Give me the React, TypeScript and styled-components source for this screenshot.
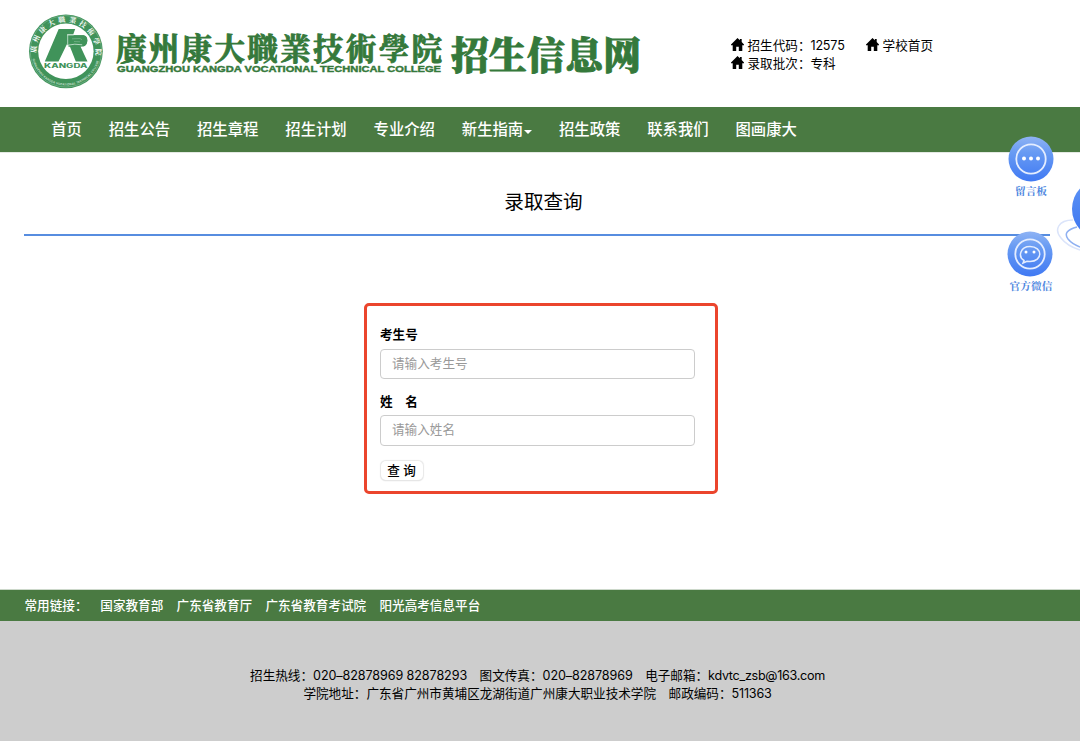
import React from 'react';
import styled, { createGlobalStyle } from 'styled-components';

const GREEN = '#4a7a42';
const LOGO_GREEN = '#35793b';
const SEAL_GREEN = '#40935a';
const BLUE = '#4d86e0';

const GlobalStyle = createGlobalStyle`
  * { box-sizing: border-box; }
  body {
    margin: 0;
    background: #fff;
    color: #000;
    font-family: Inter, 'Noto Sans CJK SC', sans-serif;
    font-size: 12.6px;
    line-height: 18px;
  }
`;

const Page = styled.div`
  position: relative;
  width: 1080px;
  height: 741px;
  overflow: hidden;
  display: flex;
  flex-direction: column;
`;

const Header = styled.header`
  display: flex;
  height: 107px;
  flex: none;
`;

const Logo = styled.svg`
  display: block;
  width: 731px;
  height: 107px;
  flex: none;
`;

const SchoolInfo = styled.div`
  padding-top: 37px;
`;

const InfoRow = styled.div`
  display: flex;
  gap: 21.5px;
`;

const InfoItem = styled.a`
  display: flex;
  align-items: center;
  white-space: nowrap;
  height: 18px;
  svg {
    width: 13px;
    height: 13px;
    margin: -3px 3.5px 0 0;
  }
`;

const Latin = styled.span<{ $spacing?: number }>`
  letter-spacing: ${(p) => p.$spacing ?? 0}px;
`;

const Nav = styled.nav`
  display: flex;
  flex: none;
  align-items: center;
  gap: 26.9px;
  height: 45px;
  padding: 1px 0 0 51.2px;
  background: ${GREEN};
  box-shadow: 0 1px 0 #e4e9e3;
`;

const NavLink = styled.a`
  display: flex;
  align-items: center;
  color: #fff;
  font-size: 15.35px;
  font-weight: 500;
  line-height: 22px;
  white-space: nowrap;
`;

const Caret = styled.span`
  margin: 3px 0 0 0.9px;
  border: 4px solid transparent;
  border-top-color: #fff;
  border-bottom-width: 0;
`;

const Main = styled.main`
  flex: 1;
  margin: 0 30px 0 24px;
`;

const Title = styled.h1`
  margin: 0;
  height: 84px;
  padding: 35px 0 0 13px;
  border-bottom: 2px solid #578de0;
  font-size: 19.6px;
  font-weight: 400;
  line-height: 30px;
  text-align: center;
`;

const QueryForm = styled.form`
  width: 354px;
  height: 191px;
  margin: 67px 0 0 340px;
  padding: 20px 20px 0 13px;
  border: 3px solid #eb452d;
  border-radius: 5px;
`;

const Label = styled.label`
  display: block;
  height: 22.5px;
  font-weight: 600;
  white-space: pre;
`;

const Field = styled.input`
  display: block;
  width: 315px;
  height: 30.5px;
  margin-bottom: 13.5px;
  padding: 0 11px 1px;
  border: 1px solid #ccc;
  border-radius: 4px;
  font: inherit;
  outline: 0;
  &::placeholder { color: #999; opacity: 1; }
`;

const SubmitButton = styled.button`
  display: block;
  width: 42px;
  height: 19px;
  margin: 15px 0 0 0.5px;
  padding: 0;
  border: 0;
  border-radius: 5px;
  background: #fff;
  box-shadow: 0 0 1px 0.5px #e8e8e8, 0 1px 1px #d0d0d0;
  color: #000;
  font: inherit;
  font-weight: 500;
  line-height: 17px;
`;

const LinksBar = styled.section`
  display: flex;
  flex: none;
  align-items: center;
  gap: 13.3px;
  height: 31px;
  padding: 0 0 0 24.5px;
  background: ${GREEN};
  box-shadow: 0 -1px 0 #ccd8ca;
  color: #fff;
  font-weight: 500;
  white-space: nowrap;
`;

const LinksTitle = styled.span`
  width: 62.5px;
`;

const Footer = styled.footer`
  display: flex;
  flex: none;
  flex-direction: column;
  align-items: center;
  height: 120px;
  padding: 46px 5px 0 0;
  background: #cdcdcd;
  white-space: nowrap;
`;

const FooterRow = styled.div`
  display: flex;
  gap: 12.5px;
`;

const FloatingTools = styled.aside`
  position: absolute;
  top: 136px;
  left: 1000px;
  width: 80px;
`;

const Tool = styled.a<{ $shift?: number }>`
  display: flex;
  flex-direction: column;
  align-items: center;
  width: 62px;
  height: 95px;
  color: ${BLUE};
  font-family: 'Noto Serif CJK SC', 'Noto Sans CJK SC', serif;
  font-size: 10.7px;
  font-weight: 700;
  line-height: 16px;
  svg {
    width: 46px;
    height: 46px;
    margin-bottom: 1px;
    margin-left: ${(p) => p.$shift ?? -1}px;
  }
`;

const Orb = styled.svg`
  position: absolute;
  top: 170px;
  left: 1050px;
  width: 30px;
  height: 90px;
`;

const HomeIcon = () => (
  <svg viewBox="0 0 13 13" fill="#000">
    <path d="M6.500 0 8.900 2.300V1h1.800v3.100L13 6.500v.8h-1.700V13H7.800V8.800H5.200V13H1.700V7.300H0v-.8z" />
  </svg>
);

const SchoolLogo = () => (
  <Logo viewBox="0 0 731 107">
    <defs>
      <path id="sealTop" d="M36.500 56A29.700 29.700 0 1 1 95.300 56" />
      <path id="sealBottom" d="M32 57A34.400 34.400 0 0 0 99.800 57" />
    </defs>
    <circle cx="65.900" cy="51.300" r="36.900" fill={SEAL_GREEN} />
    <circle cx="65.900" cy="51.300" r="35.700" fill="none" stroke="#8fc0a0" strokeWidth=".5" />
    <circle cx="65.900" cy="51.300" r="27.700" fill="#fff" />
    <text fill="#fff" fontSize="7.100" fontWeight="700" fontFamily="'Noto Serif CJK TC', serif">
      <textPath href="#sealTop" startOffset="3" textLength="98">廣州康大職業技術學院</textPath>
    </text>
    <text fill="#c5dfcd" fontSize="2.900" fontWeight="700">
      <textPath href="#sealBottom" startOffset="2" textLength="90">GUANGZHOU KANGDA VOCATIONAL TECHNICAL COLLEGE</textPath>
    </text>
    <path
      fill={SEAL_GREEN}
      d="M58.700 29H75.200L73.200 34.600H67V45H69.300L75.800 61.500H87.500L80.500 46.600 84 46.200Q87.300 44.500 87.300 40.500 87.300 35.800 83.500 35.300H67V44L58.500 61.500H44.800z"
    />
    <path fill={SEAL_GREEN} d="M67.500 35.300h16q3.800 1 3.800 5.200t-3.300 5.700l-15.500.5z" />
    <path fill="none" stroke="#d2eada" strokeWidth=".8" d="M73.700 34.900H67.700V45.200q7-1.800 14.500-.4" />
    <path fill="none" stroke="#86bd98" strokeWidth=".6" d="M72 38.800l8-.3 2 1.200M74 41.500l6 .3" />
    <text x="44" y="67.500" fill={SEAL_GREEN} fontSize="5.600" fontWeight="800" textLength="43.500" lengthAdjust="spacingAndGlyphs">
      KANGDA
    </text>
    <text
      x="116" y="60" fill={LOGO_GREEN} stroke={LOGO_GREEN} strokeWidth=".9" strokeLinejoin="round"
      fontSize="30.500" fontWeight="700" textLength="326" fontFamily="'Noto Serif CJK TC', 'Noto Sans CJK TC', serif"
    >
      廣州康大職業技術學院
    </text>
    <text
      x="117" y="72" fill={LOGO_GREEN} stroke={LOGO_GREEN} strokeWidth=".4" fontSize="8.600" fontWeight="700"
      fontFamily="'Liberation Sans', sans-serif" textLength="324" lengthAdjust="spacingAndGlyphs"
    >
      GUANGZHOU KANGDA VOCATIONAL TECHNICAL COLLEGE
    </text>
    <text
      x="451" y="68.500" fill={LOGO_GREEN} stroke={LOGO_GREEN} strokeWidth=".9"
      fontSize="37.800" fontWeight="900" textLength="190"
      fontFamily="'Noto Serif CJK SC', 'Noto Sans CJK SC', serif"
    >
      招生信息网
    </text>
  </Logo>
);

const Bubble = ({ id, children }: { id: string; children: React.ReactNode }) => (
  <svg viewBox="0 0 46 46">
    <defs>
      <linearGradient id={id} x1="0" y1="0" x2="0" y2="1">
        <stop offset="0" stopColor="#8fb3f4" />
        <stop offset=".35" stopColor="#689bf3" />
        <stop offset="1" stopColor="#4079f3" />
      </linearGradient>
    </defs>
    <circle cx="23" cy="23" r="22.500" fill={`url(#${id})`} />
    <circle cx="23" cy="23" r="14.700" fill="none" stroke="#e4edff" strokeWidth="1.800" />
    {children}
  </svg>
);

const NAV = ['首页', '招生公告', '招生章程', '招生计划', '专业介绍', '新生指南', '招生政策', '联系我们', '图画康大'];
const LINKS = ['国家教育部', '广东省教育厅', '广东省教育考试院', '阳光高考信息平台'];

export default function App() {
  return (
    <Page>
      <GlobalStyle />
      <Header>
        <SchoolLogo />
        <SchoolInfo>
          <InfoRow>
            <InfoItem><HomeIcon />招生代码：<Latin $spacing={-0.2}>12575</Latin></InfoItem>
            <InfoItem><HomeIcon />学校首页</InfoItem>
          </InfoRow>
          <InfoRow>
            <InfoItem><HomeIcon />录取批次：专科</InfoItem>
          </InfoRow>
        </SchoolInfo>
      </Header>
      <Nav>
        {NAV.map((name) => (
          <NavLink key={name}>{name}{name === '新生指南' && <Caret />}</NavLink>
        ))}
      </Nav>
      <Main>
        <Title>录取查询</Title>
        <QueryForm onSubmit={(e) => e.preventDefault()}>
          <Label htmlFor="number">考生号</Label>
          <Field id="number" placeholder="请输入考生号" />
          <Label htmlFor="name">姓　名</Label>
          <Field id="name" placeholder="请输入姓名" />
          <SubmitButton>查 询</SubmitButton>
        </QueryForm>
      </Main>
      <LinksBar>
        <LinksTitle>常用链接：</LinksTitle>
        {LINKS.map((name) => <span key={name}>{name}</span>)}
      </LinksBar>
      <Footer>
        <FooterRow>
          <span>招生热线：<Latin $spacing={-0.1}>020–82878969 82878293</Latin></span>
          <span>图文传真：<Latin $spacing={-0.1}>020–82878969</Latin></span>
          <span>电子邮箱：<Latin $spacing={-0.3}>kdvtc_zsb@163.com</Latin></span>
        </FooterRow>
        <FooterRow>
          <span>学院地址：广东省广州市黄埔区龙湖街道广州康大职业技术学院</span>
          <span>邮政编码：<Latin $spacing={-0.2}>511363</Latin></span>
        </FooterRow>
      </Footer>
      <Orb viewBox="0 0 30 90">
        <defs>
          <linearGradient id="orb" x1="0" y1="0" x2="0" y2="1">
            <stop offset="0" stopColor="#5d94f6" />
            <stop offset="1" stopColor="#3c74ef" />
          </linearGradient>
        </defs>
        <path d="M23 50C8 50 4 60 11 68q6 8 19 12" fill="none" stroke="#dbe4fa" strokeWidth="1.500" />
        <path d="M27 57q-15 4-9 12 4 5 12 8" fill="none" stroke="#8fb0f1" strokeWidth="1.500" />
        <circle cx="52" cy="39" r="30" fill="url(#orb)" />
      </Orb>
      <FloatingTools>
        <Tool>
          <Bubble id="message">
            <g fill="#fff"><circle cx="16" cy="22.500" r="2" /><circle cx="23" cy="22.500" r="2" /><circle cx="30" cy="22.500" r="2" /></g>
          </Bubble>
          留言板
        </Tool>
        <Tool $shift={-2}>
          <Bubble id="wechat">
            <path d="M17 29.500c-6.500-4-3.500-14 6-14 13 0 13 15 0 15l-3-.3-4 1.800z" fill="none" stroke="#e4edff" strokeWidth="1.500" />
            <g fill="#fff"><circle cx="19" cy="21" r="1.500" /><circle cx="27" cy="21" r="1.500" /></g>
          </Bubble>
          官方微信
        </Tool>
      </FloatingTools>
    </Page>
  );
}
